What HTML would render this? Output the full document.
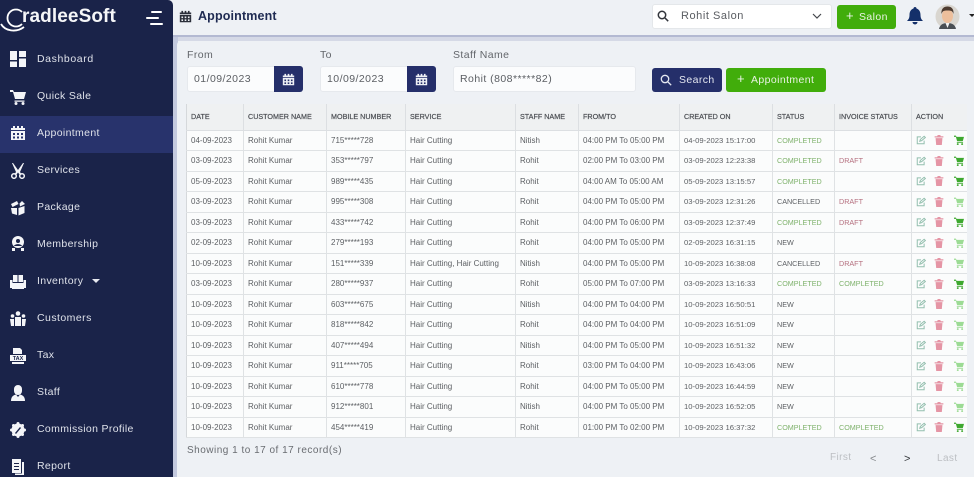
<!DOCTYPE html>
<html><head><meta charset="utf-8"><style>
*{box-sizing:border-box}
html{background:#eef1f5}
html,body{margin:0;padding:0;width:974px;height:477px;overflow:hidden;font-family:"Liberation Sans",sans-serif}
body{background:#eef1f5;filter:blur(.35px)}
.a{position:absolute}
#side{left:0;top:0;width:173px;height:477px;background:#1a2349;border-top-right-radius:5px}
.m{position:absolute;left:37px;color:#dfe2ea;font-size:10.5px;letter-spacing:.35px;line-height:14px;white-space:nowrap}
.i{position:absolute;left:10px;width:16px;height:16px;fill:#f4f5f8;color:#1a2349}
table{position:absolute;left:186px;top:104px;width:780px;border-collapse:collapse;table-layout:fixed;font-size:8px;color:#5c5f63;background:#fbfcfc}
th{height:26px;background:#eff1f2;font-weight:400;text-align:left;color:#4c4f54;font-size:7.2px;padding:0 0 0 4px;border:1px solid #dcdfe2;border-top:none;white-space:nowrap;-webkit-text-stroke:.2px #4c4f54}
td{height:20.5px;padding:0 0 0 4px;border:1px solid #dfe2e4;white-space:nowrap;overflow:hidden}
tr>:first-child{border-left:1px solid #d5d8db}tr>:last-child{border-right:none}
td:nth-child(7){font-size:7.7px}
td:nth-child(8),td:nth-child(9){font-size:7.2px}
.g{color:#7fb26c}.r{color:#b5707f}
td svg{display:inline-block;width:10px;height:10px;vertical-align:middle}
td svg+svg{margin-left:8px}
td svg+svg+svg{margin-left:10px}
.e{fill:none;stroke:#93bfae;stroke-width:1.6}.t{fill:#e595a5}.c1{fill:#3ea82f}.c2{fill:#9cdb94}
.in{position:absolute;background:#fbfcfd;border:1px solid #e6e9ed;border-radius:3px;color:#5b5e63;font-size:10.5px;letter-spacing:.45px;line-height:25px;padding-left:6px}
.lb{position:absolute;color:#63666b;font-size:10.5px;letter-spacing:.4px;line-height:14px}
.cb{position:absolute;top:66px;width:29px;height:26px;background:#252f6a;border-radius:0 3px 3px 0;color:#252f6a}
.cb svg{position:absolute;left:8px;top:7px;width:13px;height:13px;fill:#eef0f5}
.btn{position:absolute;border-radius:3px;color:#e9f3e4;font-size:10.5px;letter-spacing:.4px;line-height:24px;white-space:nowrap}
</style></head><body>
<svg width="0" height="0" style="position:absolute"><defs>
<symbol id="cal" viewBox="0 0 16 16"><path d="M3 1h2v2H3zM7 1h2v2H7zM11 1h2v2h-2zM1 3h14v2H1zM1 6h14v9H1z"/><path fill="currentColor" d="M3 8h2v2H3zM7 8h2v2H7zM11 8h2v2h-2zM3 11.500h2v2H3zM7 11.500h2v2H7zM11 11.500h2v2h-2z"/></symbol>
<symbol id="cart" viewBox="0 0 16 16"><path d="M0 1h3l1 2h12l-2 7H5L3 3H0zM4.500 11.500h10v1.300h-10z"/><circle cx="6" cy="14.500" r="1.500"/><circle cx="13" cy="14.500" r="1.500"/></symbol>
<symbol id="ed" viewBox="0 0 16 16"><path d="M13 9v5H2V3h6"/><path d="M6 10l1-3 6-5 2 2-6 5z"/></symbol>
<symbol id="tr" viewBox="0 0 16 16"><path d="M6 0h4l1 2h4v2H1V2h4zM2.500 5h11L12.500 16h-9z"/></symbol>
</defs></svg>

<div class="a" style="left:173px;top:0;width:4px;height:477px;background:#eef1f5"></div>
<div class="a" style="left:173px;top:35px;width:801px;height:2px;background:#b3b9d2"></div>
<div class="a" style="left:173px;top:37px;width:801px;height:4px;background:#d5d9e6"></div>
<div class="a" style="left:173px;top:37px;width:5px;height:440px;background:#c3c9de"></div>
<div class="a" style="left:177px;top:41px;width:797px;height:436px;background:#eef1f5;border-radius:4px 0 0 0"></div>

<div id="side" class="a">
<svg class="a" style="left:0;top:6px" width="30" height="27" viewBox="0 0 30 27"><path d="M22 6A8.500 8.500 0 1 0 22 18" fill="none" stroke="#fff" stroke-width="1.800"/><path d="M1 18c4 7 15 9 23 3" fill="none" stroke="#fff" stroke-width="1.800"/></svg>
<div class="a" style="left:22px;top:5px;color:#f5f6f8;font-size:19px;font-weight:700;letter-spacing:.1px;line-height:24px">radleeSoft</div>
<svg class="a" style="left:146px;top:11px" width="18" height="15" viewBox="0 0 18 15" fill="#fff"><rect x="5" y="0" width="11" height="2" rx="1"/><rect x="0" y="6" width="13" height="2" rx="1"/><rect x="4" y="12" width="13" height="2" rx="1"/></svg>
<div class="a" style="left:0;top:116px;width:173px;height:37px;background:#28336c"></div>

<svg class="i" style="top:51px" viewBox="0 0 16 16"><path d="M0 0h7v9H0zM9 0h7v6H9zM0 10.500h7V16H0zM9 7.500h7V16H9z"/></svg>
<div class="m" style="top:52px;letter-spacing:.6px">Dashboard</div>
<svg class="i" style="top:89px"><use href="#cart"/></svg>
<div class="m" style="top:89px">Quick Sale</div>
<svg class="i" style="top:125px;color:#28336c"><use href="#cal"/></svg>
<div class="m" style="top:126px">Appointment</div>
<svg class="i" style="top:163px" viewBox="0 0 16 16"><path d="M3 0l5 7 5-7h1l-4 9 1 1.500-1.500 1L8 9.500 6.500 11.500 5 10.500 6 9 2 0z"/><circle cx="4" cy="13" r="2.300" fill="none" stroke="#f4f5f8" stroke-width="1.500"/><circle cx="12" cy="13" r="2.300" fill="none" stroke="#f4f5f8" stroke-width="1.500"/></svg>
<div class="m" style="top:163px">Services</div>
<svg class="i" style="top:200px" viewBox="0 0 16 16"><path d="M1 4l6-3 1.500 3-6 3zM9.500 3.500L12 1l3 3-5 2.500zM1 8l6 0v7l-5-1.500zM8.500 8l6-2v7l-6 2.500z"/></svg>
<div class="m" style="top:200px">Package</div>
<svg class="i" style="top:236px" viewBox="0 0 16 16"><path d="M8 0a6 6 0 1 1 0 12A6 6 0 0 1 8 0z"/><circle cx="8" cy="5" r="2" fill="#1a2349"/><path d="M4 10c1-2.500 7-2.500 8 0z" fill="#1a2349"/><path d="M2 12h3v3H2zM11 12h3v3h-3z"/></svg>
<div class="m" style="top:237px">Membership</div>
<svg class="i" style="top:274px" viewBox="0 0 16 16"><path d="M3 1h4.500v7H3zM8.500 1H13v7H8.500zM0 6h2.500v3h11V6H16v8h-2v1H2v-1H0z"/></svg>
<div class="m" style="top:274px">Inventory</div>
<div class="a" style="left:92px;top:279px;width:0;height:0;border:4px solid transparent;border-top:4px solid #e8eaf0;border-bottom:0"></div>
<svg class="i" style="top:311px" viewBox="0 0 16 16"><circle cx="8" cy="2.500" r="2.300"/><circle cx="2.500" cy="5" r="1.800"/><circle cx="13.500" cy="5" r="1.800"/><path d="M5 6h6v9H5zM0 8h4v7H1zM12 8h4l-1 7h-3z"/></svg>
<div class="m" style="top:311px;letter-spacing:.45px">Customers</div>
<svg class="i" style="top:348px" viewBox="0 0 16 16"><path d="M3 0h7l2 2v4H3zM0 7h16v6H0zM2 14h12v2H2z"/><text x="8" y="12" font-size="5.500" font-weight="700" text-anchor="middle" fill="#1a2349" font-family="Liberation Sans">TAX</text></svg>
<div class="m" style="top:348px">Tax</div>
<svg class="i" style="top:385px" viewBox="0 0 16 16"><path d="M8 0a4 4 0 0 1 4 4v2a4 4 0 0 1-8 0V4a4 4 0 0 1 4-4zM1 16c0-5 3-6 5-6.500L8 12l2-2.500c2 .5 5 1.500 5 6.500z"/></svg>
<div class="m" style="top:385px">Staff</div>
<svg class="i" style="top:422px" viewBox="0 0 16 16"><circle cx="8" cy="8" r="6.500"/><circle cx="8" cy="1.500" r="1.500"/><circle cx="8" cy="14.500" r="1.500"/><circle cx="1.500" cy="8" r="1.500"/><circle cx="14.500" cy="8" r="1.500"/><circle cx="3.500" cy="3.500" r="1.500"/><circle cx="12.500" cy="3.500" r="1.500"/><circle cx="3.500" cy="12.500" r="1.500"/><circle cx="12.500" cy="12.500" r="1.500"/><path d="M5 11l5-6 1 1-5 6z" fill="#1a2349"/></svg>
<div class="m" style="top:422px">Commission Profile</div>
<svg class="i" style="top:459px" viewBox="0 0 16 16"><path d="M2 0h9v14H2z"/><path d="M12 3h2v13H5v-1.500h7z"/><path d="M4 4h5v1H4zM4 7h5v1H4zM4 10h5v1H4z" fill="#1a2349"/></svg>
<div class="m" style="top:459px">Report</div>
</div>

<svg class="a" style="left:179px;top:10px;width:13px;height:13px;fill:#2b2f3a;color:#eef1f5"><use href="#cal"/></svg>
<div class="a" style="left:198px;top:8px;color:#1f2b52;font-size:12.500px;font-weight:700;letter-spacing:.15px;line-height:17px">Appointment</div>

<div class="a" style="left:652px;top:4px;width:180px;height:25px;background:#fff;border:1px solid #e4e7ea;border-radius:3px"></div>
<svg class="a" style="left:657px;top:10px" width="12" height="12" viewBox="0 0 12 12" fill="none" stroke="#33363c" stroke-width="1.500"><circle cx="5" cy="5" r="3.700"/><path d="M8 8l3.200 3.200"/></svg>
<div class="a" style="left:681px;top:9px;color:#5a5d62;font-size:11px;letter-spacing:.55px;line-height:15px">Rohit Salon</div>
<svg class="a" style="left:812px;top:13px" width="10" height="7" viewBox="0 0 10 7" fill="none" stroke="#44474c" stroke-width="1.200"><path d="M1 1l4 4 4-4"/></svg>
<div class="btn" style="left:837px;top:5px;width:59px;height:24px;background:#41ad0b"><span style="position:absolute;left:9px;top:-1px;font-size:13px">+</span><span style="position:absolute;left:22px">Salon</span></div>
<svg class="a" style="left:907px;top:7px" width="16" height="18" viewBox="0 0 16 18" fill="#14306a"><path d="M8 0c1 0 1.500.7 1.500 1.500C12 2.300 13.500 4.500 13.500 8c0 3 1 4.500 2.500 6H0c1.500-1.500 2.500-3 2.500-6 0-3.500 1.500-5.700 4-6.500C6.500.7 7 0 8 0zM5.500 15h5a2.500 2.500 0 0 1-5 0z"/></svg>
<svg class="a" style="left:935px;top:4px" width="25" height="25" viewBox="0 0 25 25"><circle cx="12.500" cy="12.500" r="12" fill="#d9d6d0"/><path d="M4 25c1-5 5-6 8.500-6s7.500 1 8.500 6z" fill="#4a4f55"/><path d="M10.500 19h4l-2 5z" fill="#f3f3f3"/><ellipse cx="12.500" cy="12" rx="5.500" ry="7" fill="#edbf9c"/><path d="M6.500 10c-.5-6 3-7.500 6-7.500s6.500 1.500 6 7.500c-1-3-2-3.500-6-3.500S7.500 7 6.500 10z" fill="#4d3b30"/></svg>
<div class="a" style="left:969px;top:14px;width:0;height:0;border:3px solid transparent;border-top:3px solid #222;border-bottom:0"></div>

<div class="lb" style="left:187px;top:48px">From</div>
<div class="lb" style="left:320px;top:48px">To</div>
<div class="lb" style="left:453px;top:48px">Staff Name</div>
<div class="in" style="left:187px;top:66px;width:90px;height:26px">01/09/2023</div>
<div class="cb" style="left:274px"><svg><use href="#cal"/></svg></div>
<div class="in" style="left:320px;top:66px;width:90px;height:26px">10/09/2023</div>
<div class="cb" style="left:407px"><svg><use href="#cal"/></svg></div>
<div class="in" style="left:453px;top:66px;width:183px;height:26px">Rohit (808*****82)</div>
<div class="btn" style="left:652px;top:68px;width:70px;height:24px;background:#252f6a;color:#e4e7f0"><svg style="position:absolute;left:8px;top:6px" width="12" height="12" viewBox="0 0 12 12" fill="none" stroke="#e4e7f0" stroke-width="1.300"><circle cx="5" cy="5" r="3.700"/><path d="M8 8l3.200 3.200"/></svg><span style="position:absolute;left:27px">Search</span></div>
<div class="btn" style="left:726px;top:68px;width:100px;height:24px;background:#41ad0b"><span style="position:absolute;left:11px;top:-1px;font-size:13px">+</span><span style="position:absolute;left:25px">Appointment</span></div>

<table>
<colgroup><col style="width:57px"><col style="width:83px"><col style="width:79px"><col style="width:110px"><col style="width:63px"><col style="width:101px"><col style="width:93px"><col style="width:62px"><col style="width:77px"><col style="width:55px"></colgroup>
<tr><th>DATE</th><th>CUSTOMER NAME</th><th>MOBILE NUMBER</th><th>SERVICE</th><th>STAFF NAME</th><th>FROM/TO</th><th>CREATED ON</th><th>STATUS</th><th>INVOICE STATUS</th><th>ACTION</th></tr>
<tr><td>04-09-2023</td><td>Rohit Kumar</td><td>715*****728</td><td>Hair Cutting</td><td>Nitish</td><td>04:00 PM To 05:00 PM</td><td>04-09-2023 15:17:00</td><td class="g">COMPLETED</td><td></td><td><svg class="e"><use href="#ed"/></svg><svg class="t"><use href="#tr"/></svg><svg class="c1"><use href="#cart"/></svg></td></tr>
<tr><td>03-09-2023</td><td>Rohit Kumar</td><td>353*****797</td><td>Hair Cutting</td><td>Rohit</td><td>02:00 PM To 03:00 PM</td><td>03-09-2023 12:23:38</td><td class="g">COMPLETED</td><td class="r">DRAFT</td><td><svg class="e"><use href="#ed"/></svg><svg class="t"><use href="#tr"/></svg><svg class="c1"><use href="#cart"/></svg></td></tr>
<tr><td>05-09-2023</td><td>Rohit Kumar</td><td>989*****435</td><td>Hair Cutting</td><td>Rohit</td><td>04:00 AM To 05:00 AM</td><td>05-09-2023 13:15:57</td><td class="g">COMPLETED</td><td></td><td><svg class="e"><use href="#ed"/></svg><svg class="t"><use href="#tr"/></svg><svg class="c1"><use href="#cart"/></svg></td></tr>
<tr><td>03-09-2023</td><td>Rohit Kumar</td><td>995*****308</td><td>Hair Cutting</td><td>Rohit</td><td>04:00 PM To 05:00 PM</td><td>03-09-2023 12:31:26</td><td>CANCELLED</td><td class="r">DRAFT</td><td><svg class="e"><use href="#ed"/></svg><svg class="t"><use href="#tr"/></svg><svg class="c2"><use href="#cart"/></svg></td></tr>
<tr><td>03-09-2023</td><td>Rohit Kumar</td><td>433*****742</td><td>Hair Cutting</td><td>Rohit</td><td>04:00 PM To 06:00 PM</td><td>03-09-2023 12:37:49</td><td class="g">COMPLETED</td><td class="r">DRAFT</td><td><svg class="e"><use href="#ed"/></svg><svg class="t"><use href="#tr"/></svg><svg class="c1"><use href="#cart"/></svg></td></tr>
<tr><td>02-09-2023</td><td>Rohit Kumar</td><td>279*****193</td><td>Hair Cutting</td><td>Rohit</td><td>04:00 PM To 05:00 PM</td><td>02-09-2023 16:31:15</td><td>NEW</td><td></td><td><svg class="e"><use href="#ed"/></svg><svg class="t"><use href="#tr"/></svg><svg class="c2"><use href="#cart"/></svg></td></tr>
<tr><td>10-09-2023</td><td>Rohit Kumar</td><td>151*****339</td><td>Hair Cutting, Hair Cutting</td><td>Nitish</td><td>04:00 PM To 05:00 PM</td><td>10-09-2023 16:38:08</td><td>CANCELLED</td><td class="r">DRAFT</td><td><svg class="e"><use href="#ed"/></svg><svg class="t"><use href="#tr"/></svg><svg class="c2"><use href="#cart"/></svg></td></tr>
<tr><td>03-09-2023</td><td>Rohit Kumar</td><td>280*****937</td><td>Hair Cutting</td><td>Rohit</td><td>05:00 PM To 07:00 PM</td><td>03-09-2023 13:16:33</td><td class="g">COMPLETED</td><td class="g">COMPLETED</td><td><svg class="e"><use href="#ed"/></svg><svg class="t"><use href="#tr"/></svg><svg class="c1"><use href="#cart"/></svg></td></tr>
<tr><td>10-09-2023</td><td>Rohit Kumar</td><td>603*****675</td><td>Hair Cutting</td><td>Nitish</td><td>04:00 PM To 04:00 PM</td><td>10-09-2023 16:50:51</td><td>NEW</td><td></td><td><svg class="e"><use href="#ed"/></svg><svg class="t"><use href="#tr"/></svg><svg class="c2"><use href="#cart"/></svg></td></tr>
<tr><td>10-09-2023</td><td>Rohit Kumar</td><td>818*****842</td><td>Hair Cutting</td><td>Rohit</td><td>04:00 PM To 04:00 PM</td><td>10-09-2023 16:51:09</td><td>NEW</td><td></td><td><svg class="e"><use href="#ed"/></svg><svg class="t"><use href="#tr"/></svg><svg class="c2"><use href="#cart"/></svg></td></tr>
<tr><td>10-09-2023</td><td>Rohit Kumar</td><td>407*****494</td><td>Hair Cutting</td><td>Nitish</td><td>04:00 PM To 05:00 PM</td><td>10-09-2023 16:51:32</td><td>NEW</td><td></td><td><svg class="e"><use href="#ed"/></svg><svg class="t"><use href="#tr"/></svg><svg class="c2"><use href="#cart"/></svg></td></tr>
<tr><td>10-09-2023</td><td>Rohit Kumar</td><td>911*****705</td><td>Hair Cutting</td><td>Rohit</td><td>03:00 PM To 04:00 PM</td><td>10-09-2023 16:43:06</td><td>NEW</td><td></td><td><svg class="e"><use href="#ed"/></svg><svg class="t"><use href="#tr"/></svg><svg class="c2"><use href="#cart"/></svg></td></tr>
<tr><td>10-09-2023</td><td>Rohit Kumar</td><td>610*****778</td><td>Hair Cutting</td><td>Rohit</td><td>04:00 PM To 05:00 PM</td><td>10-09-2023 16:44:59</td><td>NEW</td><td></td><td><svg class="e"><use href="#ed"/></svg><svg class="t"><use href="#tr"/></svg><svg class="c2"><use href="#cart"/></svg></td></tr>
<tr><td>10-09-2023</td><td>Rohit Kumar</td><td>912*****801</td><td>Hair Cutting</td><td>Nitish</td><td>04:00 PM To 05:00 PM</td><td>10-09-2023 16:52:05</td><td>NEW</td><td></td><td><svg class="e"><use href="#ed"/></svg><svg class="t"><use href="#tr"/></svg><svg class="c2"><use href="#cart"/></svg></td></tr>
<tr><td>10-09-2023</td><td>Rohit Kumar</td><td>454*****419</td><td>Hair Cutting</td><td>Rohit</td><td>01:00 PM To 02:00 PM</td><td>10-09-2023 16:37:32</td><td class="g">COMPLETED</td><td class="g">COMPLETED</td><td><svg class="e"><use href="#ed"/></svg><svg class="t"><use href="#tr"/></svg><svg class="c1"><use href="#cart"/></svg></td></tr>
</table>

<div class="lb" style="left:187px;top:444px;font-size:10px;letter-spacing:.5px;color:#696c71">Showing 1 to 17 of 17 record(s)</div>
<div class="lb" style="left:830px;top:451px;font-size:10px;color:#bcbfc3">First</div>
<div class="lb" style="left:870px;top:452px;font-size:11px;color:#85888c">&lt;</div>
<div class="lb" style="left:904px;top:452px;font-size:11px;color:#33363a">&gt;</div>
<div class="lb" style="left:937px;top:452px;font-size:10px;color:#bcbfc3">Last</div>
</body></html>
